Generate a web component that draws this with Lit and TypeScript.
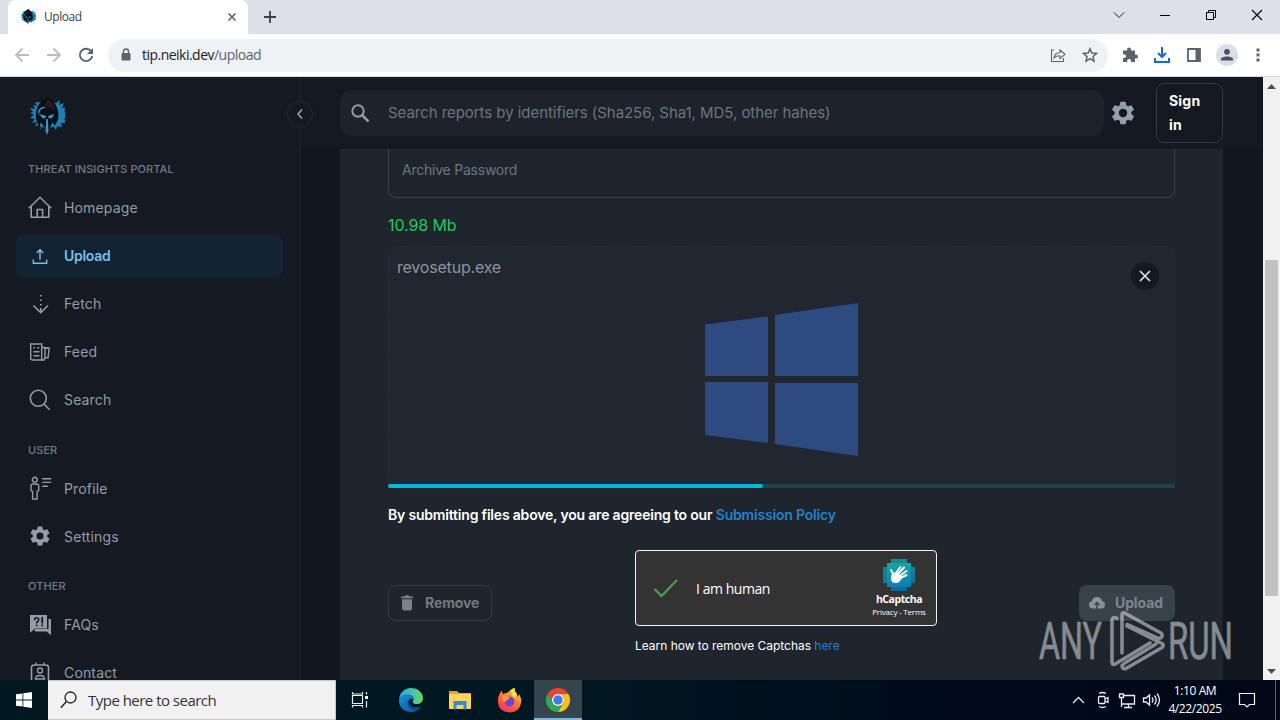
import { LitElement, html, css, svg } from "lit";
import { customElement } from "lit/decorators.js";
import { classMap } from "lit/directives/class-map.js";

const gear = "M19.14 12.94c.04-.3.06-.61.06-.94s-.02-.64-.07-.94l2.03-1.58a.49.49 0 0 0 .12-.61l-1.92-3.32a.49.49 0 0 0-.59-.22l-2.39.96a7 7 0 0 0-1.62-.94l-.36-2.54a.48.48 0 0 0-.48-.41h-3.84a.48.48 0 0 0-.47.41l-.36 2.54c-.59.24-1.13.57-1.62.94l-2.39-.96a.48.48 0 0 0-.59.22L2.74 8.87a.48.48 0 0 0 .12.61l2.03 1.58a7 7 0 0 0 0 1.88l-2.03 1.58a.49.49 0 0 0-.12.61l1.92 3.32c.12.22.37.29.59.22l2.39-.96c.5.38 1.03.7 1.62.94l.36 2.54c.05.24.24.41.48.41h3.84c.24 0 .44-.17.47-.41l.36-2.54a7 7 0 0 0 1.62-.94l2.39.96c.22.08.47 0 .59-.22l1.92-3.32a.48.48 0 0 0-.12-.61zM12 15.6a3.6 3.6 0 1 1 0-7.2 3.6 3.6 0 0 1 0 7.2z";

const icons: Record<string, unknown> = {
  home: svg`<path class="ln" d="M.8 12.2 12 1.3l11.2 10.9M3.2 10.5v10.7h17.6V10.5M9.2 21v-7.500h5.400V21"/>`,
  upload: svg`<path class="ln thin" d="M5.300 15.500v3.800h13.400v-3.800M12 15.800V6M8.800 9 12 5.800 15.200 9"/>`,
  fetch: svg`<path class="ln" d="M5.500 13.500l7.200 7.200 7.200-7.200M12.700 20V16"/><path class="fl" d="M12 3h1.600v1.600H12zM12 7.500h1.600v1.600H12zM12 12h1.600v1.600H12z"/>`,
  feed: svg`<path class="ln thin" d="M2.700 4h11v16h-9q-2 0-2-2zM13.700 7.200l7.500 1-1.200 9.600h-3.200l-.6 2.200h-2.500M17 8.200v9M5.500 7.800h1.600M9.300 7.800h2M5.500 11.700h6M5.500 15.700h6"/>`,
  search: svg`<circle class="ln" cx="10.300" cy="10.300" r="8"/><path class="ln" d="m16.200 16.200 5.400 5.600"/>`,
  profile: svg`<circle class="ln thin" cx="6.800" cy="3.700" r="2.400"/><path class="ln thin" d="M5 8h3.700q2 0 2 2v4.500l-1.600 1V23H4.600v-7.500l-1.600-1V10q0-2 2-2zM14.200 2.800h9M14.200 6.400h9M14.200 10.200h5.600"/>`,
  gear: svg`<path class="fl" d=${gear}/>`,
  faq: svg`<path class="fl" fill-rule="evenodd" d="M2 2h17v13.500H7L2 19.700zM20.500 6H23v16.300l-4.200-3.800H6.800V16H20.500zM5.700 7.300h1.700q0-1.700 1.500-1.700c1.700 0 1.200 1.600.4 2.200-1 .8-1.400 1.200-1.400 2.700h1.600c0-1.800 2-1.700 2-4q0-2.500-2.700-2.500-3 0-3.100 3.300zM7.900 11.600h1.600v1.600H7.900zM13.300 4h1.800v6.500h-1.800zM13.300 11.600h1.800v1.600h-1.800z"/>`,
  contact: svg`<rect class="ln" x="3.500" y="4" width="17" height="19" rx="2.500"/><circle class="ln thin" cx="12" cy="9.500" r="2.500"/><path class="ln thin" d="M7.500 18q0-3.500 4.500-3.500t4.500 3.500zM8 1.500V4M16 1.500V4"/>`,
};

const spartan = svg`
  <path fill="#207fb4" d="M9 5 6 6l2 3-4-1 2 4-5-1 3 4-3 1 4 2-4 3 5 1-3 4 5-1-2 4 5-1 0 4 3-3 5 3 5-3 3 4 1-4 5 1-1-4 5 0-2-4 4-1-3-3 3-2-4-2 3-4-5 1 2-5-5 2 1-5-4 3z"/>
  <path fill="#0a1017" d="M19 0Q9 4 7 15q-1 10 4 15l6 3 8-4q6-6 4-15Q27 5 19 0z"/>
  <path fill="#2a1a1f" d="M19 2q7 5 7 13l-3-4-7-2z"/>
  <path fill="#3796ca" d="m11 17 6 2-1 2.500q-4 0-5-4.500zm14 0-6 2 1 2.500q4 0 5-4.500zM17.300 22h1.600l.6 12-1.500 4-1.500-4zM9 14q3-5 8-4l-6 3-1 6zM12 25l3 6-4-2zM24 25l-3 6 4-2z"/>`;

const captchaRows = [[2, 6], [1, 7], [0, 8], [0, 8], [0, 8], [0, 8], [1, 7], [2, 6]];

@customElement("app-icon")
class AppIcon extends LitElement {
  static properties = { name: {} };
  declare name: string;
  static styles = css`
    :host { display: block; width: 24px; height: 24px; }
    svg { display: block; width: 100%; height: 100%; }
    .ln { fill: none; stroke: currentColor; stroke-width: 1.600; }
    .thin { stroke-width: 1.400; }
    .fl { fill: currentColor; }
  `;
  render() {
    return html`<svg viewBox="0 0 24 24">${icons[this.name]}</svg>`;
  }
}

@customElement("browser-chrome")
class BrowserChrome extends LitElement {
  static styles = css`
    :host { display: block; height: 77px; font-family: "Open Sans", sans-serif; color: #3c4043; }
    svg { display: block; fill: none; stroke: #5f6368; }
    .strip { height: 34px; background: #dde0e8; display: flex; align-items: center; padding-left: 8px; box-sizing: border-box; }
    .tab { width: 240px; height: 34px; border-radius: 8px 8px 0 0; background: #fff; display: flex; align-items: center; padding: 0 11px 0 12px; box-sizing: border-box; font-size: 12px; }
    .fav { width: 16px; height: 16px; }
    .tab span { flex: 1; margin-left: 8px; letter-spacing: -.45px; line-height: 16px; }
    .plus { margin-left: 15px; }
    .win { margin-left: auto; display: flex; align-items: center; gap: 34px; padding: 0 17px 5px 0; }
    .bar { height: 43px; background: #fff; display: flex; align-items: center; padding: 0 14px; box-sizing: border-box; border-bottom: 1px solid #d5d9de; }
    .nav { display: flex; gap: 16px; width: 94px; }
    .omni { width: 1000px; height: 33px; border-radius: 17px; background: #eff2f5; display: flex; align-items: center; padding: 0 10px; box-sizing: border-box; font-size: 14px; color: #5f6368; }
    .url { margin-left: 8px; flex: 1; letter-spacing: -.52px; padding-bottom: 1px; }
    .url b { font-weight: 400; color: #202124; }
    .share { margin-right: 16px; }
    .tools { display: flex; gap: 14px; align-items: center; margin-left: 13px; }
    .me { margin: 0 -1px; }
  `;
  render() {
    return html`
      <div class="strip">
        <div class="tab">
          <svg class="fav" viewBox="0 0 36 38"><g stroke="none">${spartan}</g></svg>
          <span>Upload</span>
          <svg width="10" height="10"><path d="m1.500 1.500 7 7m0-7-7 7" stroke-width="1.700"/></svg>
        </div>
        <svg class="plus" width="14" height="14"><path d="M7 1v12M1 7h12" stroke="#3c4043" stroke-width="1.800"/></svg>
        <div class="win">
          <svg width="12" height="12"><path d="m1 3.500 5 5 5-5" stroke="#222"/></svg>
          <svg width="12" height="12"><path d="M1 6.500h10" stroke="#000"/></svg>
          <svg width="12" height="12"><path d="M1.500 3.500h7v7h-7zM3.500 3V1.500h7v7H9" stroke="#000"/></svg>
          <svg width="12" height="12"><path d="m1 1 10 10m0-10L1 11" stroke="#000" stroke-width="1.100"/></svg>
        </div>
      </div>
      <div class="bar">
        <div class="nav">
          <svg width="16" height="16"><path d="M15 8H2m6.500-6.500L2 8l6.500 6.500" stroke="#bbbdc1" stroke-width="1.800"/></svg>
          <svg width="16" height="16"><path d="M1 8h13M7.500 1.500 14 8l-6.500 6.500" stroke="#bbbdc1" stroke-width="1.800"/></svg>
          <svg width="16" height="16"><path d="M13.300 4.500A6.200 6.200 0 1 0 14.200 9" stroke-width="1.900"/><path d="M15 1v6H9z" fill="#5f6368" stroke="none"/></svg>
        </div>
        <div class="omni">
          <svg width="16" height="16"><path d="M4 6.500h8v6.500H4z" fill="#5f6368"/><path d="M5.500 6.500V4.300q0-2.300 2.500-2.300t2.500 2.300v2.200" stroke-width="1.400"/></svg>
          <span class="url"><b>tip.neiki.dev</b>/upload</span>
          <svg class="share" width="16" height="16"><path d="M4 3H1.500v11.500h12V11M4 11c.4-3.600 2.500-5.200 6-5.200V3l5 4.300-5 4.200V8.700c-2.500 0-4.500.6-6 2.300z" stroke-width="1.100"/></svg>
          <svg width="16" height="16"><path d="m8 1.800 1.800 4.300 4.700.4-3.500 3 1 4.600-4-2.400-4 2.400 1-4.600-3.500-3 4.700-.4z" stroke-width="1.500"/></svg>
        </div>
        <div class="tools">
          <svg width="18" height="18"><path d="M2 4.500h4.200c-1-4 4.600-4 3.800 0h4v4c4-1 4 5 0 4V16H10c.8-4-4.600-4-3.800 0H2v-4c4 .8 4-4.400 0-3.600z" fill="#5f6368" stroke="none"/></svg>
          <svg width="18" height="18"><path d="M9 1v9.500M5 7l4 4 4-4M2 12v4h14v-4" stroke="#1a66d2" stroke-width="2"/></svg>
          <svg width="18" height="18"><path d="M3 3h12v12H3z" stroke-width="1.800"/><path d="M10.500 3H15v12h-4.500z" fill="#5f6368" stroke="none"/></svg>
          <svg class="me" width="22" height="22"><circle cx="11" cy="11" r="11" fill="#dcdee6" stroke="none"/><path d="M5 16.500v-1.300c0-3.600 12-3.600 12 0v1.300z" fill="#4a5060" stroke="none"/><circle cx="11" cy="7.800" r="2.900" fill="#4a5060" stroke="none"/></svg>
          <svg width="14" height="18"><path d="M5.500 2.500h3v3h-3zM5.500 7.500h3v3h-3zM5.500 12.500h3v3h-3z" fill="#5f6368" stroke="none"/></svg>
        </div>
      </div>`;
  }
}

@customElement("side-bar")
class SideBar extends LitElement {
  static styles = css`
    :host { display: block; position: relative; width: 300px; height: 603px; box-sizing: border-box; border-right: 1px solid #1f252d; background: #151a22; color: #939ca7; font-family: Inter, sans-serif; }
    .clip { height: 603px; overflow: hidden; padding: 20px 16px 0; box-sizing: border-box; }
    .logo { display: block; margin-left: 13px; width: 36px; height: 38px; }
    nav { padding-top: 10.500px; }
    .label { height: 40.500px; box-sizing: border-box; padding: 14px 12px 0; font-size: 11px; line-height: 18px; font-weight: 500; letter-spacing: .08px; color: #707a86; }
    .label.low { padding-top: 14.600px; }
    .item { height: 44px; margin-bottom: 4px; border-radius: 8px; display: flex; align-items: center; gap: 12px; padding: 0 12px; width: 267px; box-sizing: border-box; font-size: 14px; letter-spacing: .15px; }
    .item span { padding-bottom: 1px; }
    .item app-icon { margin-top: -1px; }
    .active { background: #122431; color: #77bfe8; font-weight: 600; letter-spacing: -.3px; }
    .collapse { position: absolute; right: -14px; top: 24px; width: 26px; height: 26px; box-sizing: border-box; border: 1px solid #242a33; border-radius: 50%; background: #151a22; display: flex; align-items: center; justify-content: center; }
  `;
  groups = [
    { label: "THREAT INSIGHTS PORTAL", items: [["home", "Homepage"], ["upload", "Upload"], ["fetch", "Fetch"], ["feed", "Feed"], ["search", "Search"]] },
    { label: "USER", items: [["profile", "Profile"], ["gear", "Settings"]] },
    { label: "OTHER", items: [["faq", "FAQs"], ["contact", "Contact"]] },
  ];
  render() {
    return html`
      <div class="clip">
        <svg class="logo" viewBox="0 0 36 38">${spartan}</svg>
        <nav>
          ${this.groups.map((g) => html`
            <div class=${classMap({ label: true, low: g.label === "USER" })}>${g.label}</div>
            ${g.items.map(([icon, text]) => html`
              <div class=${classMap({ item: true, active: text === "Upload" })}><app-icon name=${icon}></app-icon><span>${text}</span></div>`)}`)}
        </nav>
      </div>
      <div class="collapse"><svg width="8" height="12"><path d="M6 1.500 2 6l4 4.500" fill="none" stroke="#9ba3ad" stroke-width="1.600"/></svg></div>`;
  }
}

@customElement("upload-panel")
class UploadPanel extends LitElement {
  static styles = css`
    :host { display: block; width: 963px; height: 603px; background: #12171f; font-family: Inter, sans-serif; color: #fff; overflow: hidden; }
    svg { display: block; }
    header { height: 72px; box-sizing: border-box; background: #141921; padding: 6px 40px; display: flex; align-items: center; }
    .find { width: 764px; height: 46px; border-radius: 12px; background: #1e222b; display: flex; align-items: center; gap: 17px; padding-left: 10px; box-sizing: border-box; font-size: 15px; color: #6c757f; }
    .hint { letter-spacing: -.05px; padding-bottom: 2px; }
    .cog { color: #919eab; width: 28px; height: 28px; margin: 0 0 0 5px; }
    .sign { width: 67px; height: 60px; margin-left: 19px; box-sizing: border-box; border: 1px solid #343a42; border-radius: 8px; padding: 5px 12px; font-weight: 700; font-size: 14px; line-height: 24px; background: #14181f; letter-spacing: .2px; }
    .card { margin: 0 40px; height: 531px; box-sizing: border-box; padding: 0 48px; background: #1e252c; }
    .pass { height: 49px; box-sizing: border-box; border: 1px solid #3a434b; border-top: none; border-radius: 0 0 8px 8px; padding: 11px 13px; font-size: 14px; line-height: 20px; color: #6c757f; letter-spacing: -.23px; }
    .size { margin-top: 15px; height: 25px; line-height: 24px; font-size: 16px; color: #22c55e; letter-spacing: -.1px; }
    .file { position: relative; margin-top: 8px; height: 242px; box-sizing: border-box; border: 1px dashed #262e38; border-bottom: none; border-radius: 8px 8px 0 0; background: #212730; display: flex; flex-direction: column; }
    .name { padding: 8px 8px 0; line-height: 24px; font-size: 16px; color: #8c949d; letter-spacing: -.2px; }
    .art { margin: 24px 0 0 316px; }
    .close { position: absolute; right: 15px; top: 15px; width: 28px; height: 28px; border-radius: 50%; background: #141a22; display: flex; align-items: center; justify-content: center; }
    .track { margin: auto -1px 0; height: 4px; border-radius: 2px; background: #1b4352; }
    .fill { height: 4px; border-radius: 2px; background: #00b8d9; }
    .terms { margin-top: 15px; height: 24px; line-height: 24px; font-size: 14px; font-weight: 600; letter-spacing: -.19px; }
    .link { color: #2480cc; }
    .actions { margin-top: 23px; display: grid; grid-template-columns: 247px 302px 1fr; align-items: start; }
    .btn { height: 36px; margin-top: 35px; box-sizing: border-box; border-radius: 8px; display: flex; align-items: center; font-size: 14px; font-weight: 700; letter-spacing: -.1px; }
    .btn span { padding-bottom: 1px; }
    .remove { width: 104px; border: 1px solid #353e47; color: #717981; padding-left: 11px; gap: 11px; }
    .send { width: 96px; justify-self: end; background: #38424b; color: #7d868e; padding-left: 9px; gap: 9px; }
    .captcha { height: 76px; box-sizing: border-box; border: 1px solid #f4f4f4; border-radius: 4px; background: #333; display: flex; align-items: center; padding-left: 17px; font-family: "Open Sans", sans-serif; }
    .human { margin-left: 17px; font-size: 14px; width: 176px; letter-spacing: -.45px; }
    .brand { display: flex; flex-direction: column; align-items: center; width: 54px; }
    .brand b { font-size: 10.500px; line-height: 14px; margin-top: 1px; letter-spacing: -.45px; }
    .brand small { font-size: 8px; line-height: 11px; white-space: nowrap; letter-spacing: -.2px; }
    .learn { margin-top: 12px; font-size: 12px; line-height: 16px; white-space: nowrap; letter-spacing: -.03px; }
  `;
  progress = 47.6;
  render() {
    return html`
      <header>
        <div class="find">
          <svg width="21" height="21"><circle cx="8" cy="8" r="5.700" fill="none" stroke="#919aa5" stroke-width="2"/><path d="m12 12 6.500 6.500" stroke="#919aa5" stroke-width="2.500"/></svg>
          <span class="hint">Search reports by identifiers (Sha256, Sha1, MD5, other hahes)</span>
        </div>
        <app-icon class="cog" name="gear"></app-icon>
        <div class="sign">Sign<br>in</div>
      </header>
      <div class="card">
        <div class="pass">Archive Password</div>
        <div class="size"><span>10.98 Mb</span></div>
        <div class="file">
          <div class="name"><span>revosetup.exe</span></div>
          <svg class="art" width="154" height="154" fill="#2d4b80"><path d="m0 21.500 63-8V73H0zM70 12l83-12v73H70zM0 79h63v61L0 132zM70 80h83v73L70 141z"/></svg>
          <div class="close"><svg width="12" height="12"><path d="m1 1 10 10m0-10L1 11" stroke="#e3e6e9" stroke-width="1.600"/></svg></div>
          <div class="track"><div class="fill" style="width:${this.progress}%"></div></div>
        </div>
        <div class="terms"><span>By submitting files above, you are agreeing to our <span class="link">Submission Policy</span></span></div>
        <div class="actions">
          <div class="btn remove">
            <svg width="14" height="18" fill="#7b828b"><path d="M1 2.500h3.500l1-1.300h3l1 1.300H13v1.700H1zM2 5.300h10v9.200q0 2-2 2H4q-2 0-2-2z"/></svg><span>Remove</span>
          </div>
          <div>
            <div class="captcha">
              <svg width="26" height="24"><path d="m1.500 13 7 7L24 4" fill="none" stroke="#4a9a4f" stroke-width="2.400"/></svg>
              <span class="human">I am human</span>
              <div class="brand">
                <svg width="32" height="32">
                  <defs><linearGradient id="teal" gradientUnits="userSpaceOnUse" x1="14" y1="0" x2="18" y2="32"><stop stop-color="#17a99d"/><stop offset=".55" stop-color="#148fae"/><stop offset="1" stop-color="#0876b8"/></linearGradient></defs>
                  ${captchaRows.map(([a, b], y) => svg`<rect x=${a * 4} y=${y * 4} width=${(b - a) * 4} height="4" fill="url(#teal)" opacity=${y === 0 || y === 7 ? 0.75 : 1}/>`)}
                  <path fill="#0a5f7c" opacity=".4" d="M0 8h4v16H0zM28 8h4v16h-4z"/>
                  <path fill="none" stroke="#fff" stroke-width="2" stroke-linecap="round" d="m10.500 15-2.500-4M12.500 14.500l5-6.500M15 15l6-6.500M16.500 17l7-5M17.500 19l6-3"/>
                  <path fill="#fff" d="m9 13.500 1.500 1.500 3-2.500 5.500 5.500q-2 6-6 6-5.500 0-5-5.500z"/>
                </svg>
                <b>hCaptcha</b><small>Privacy - Terms</small>
              </div>
            </div>
            <div class="learn"><span>Learn how to remove Captchas <span class="link">here</span></span></div>
          </div>
          <div class="btn send">
            <svg width="18" height="16"><path fill="#89929a" d="M5 13.500q-4 0-4-3.800 0-3 3-3.700Q5 2 9 2t5 4q3 .7 3 3.700 0 3.800-4 3.800z"/><path d="M9 15V8M6.500 10 9 7.500l2.500 2.500" fill="none" stroke="#38424b" stroke-width="1.400"/></svg><span>Upload</span>
          </div>
        </div>
      </div>`;
  }
}

@customElement("task-bar")
class TaskBar extends LitElement {
  static styles = css`
    :host { display: flex; height: 40px; background: linear-gradient(90deg, #001820 0, #001722 45%, #000a1a 75%, #000818 100%); font-family: "Open Sans", sans-serif; }
    svg { display: block; }
    .cell { width: 48px; height: 40px; display: flex; align-items: center; justify-content: center; }
    .search { width: 288px; height: 40px; background: #f1f1f1; border: 1px solid #c6c9cb; border-width: 1px 1px 1px 0; box-sizing: border-box; display: flex; align-items: center; gap: 11px; padding-left: 12px; font-size: 15px; color: #333; letter-spacing: -.52px; }
    .task { width: 48px; height: 40px; display: flex; align-items: center; justify-content: center; }
    .apps { display: flex; gap: 1px; }
    .view { margin-right: 2px; }
    .on { background: #36444e; border-bottom: 2px solid #76b9ed; box-sizing: border-box; height: 40px; padding-top: 2px; }
    .tray { margin-left: auto; display: flex; align-items: center; }
    .clock { width: 66px; text-align: center; color: #fff; font-size: 12px; line-height: 18px; letter-spacing: -.4px; }
    .note { width: 38px; display: flex; justify-content: center; }
    .edge { width: 5px; height: 40px; border-left: 1px solid #59606c; box-sizing: border-box; margin-left: 9px; }
  `;
  render() {
    return html`
      <div class="cell"><svg width="16" height="16" fill="#fff"><path d="m0 2.300 6.500-.9v6.200H0zM7.300 1.300 16 0v7.600H7.300zM0 8.400h6.500v6.200L0 13.700zM7.300 8.400H16V16l-8.700-1.300z"/></svg></div>
      <div class="search">
        <svg width="17" height="18"><circle cx="10.500" cy="6.500" r="5.500" fill="none" stroke="#222" stroke-width="1.300"/><path d="M6.500 10.500.8 16.800" stroke="#222" stroke-width="1.400"/></svg>
        <span>Type here to search</span>
      </div>
      <div class="apps">
        <div class="task view"><svg width="18" height="18"><path d="M1.500 4.500h10v8h-10zM1.500 1v2h10V1M1.500 16.500v-2h10v2M15.500 1v2.500M15.500 10v6.500" fill="none" stroke="#e8eef0" stroke-width="1.200"/><path d="M14 5h3v3h-3z" fill="#fff"/></svg></div>
        <div class="task"><svg width="26" height="26" viewBox="0 0 26 26">
          <defs><linearGradient id="e1" x2="1"><stop stop-color="#25a9e0"/><stop offset="1" stop-color="#68d66a"/></linearGradient><linearGradient id="e2" x2="1" y2="1"><stop stop-color="#1592dc"/><stop offset="1" stop-color="#0c4f9e"/></linearGradient></defs>
          <path fill="url(#e1)" d="M1 12C2 5 7 1 13 1c7 0 12 5 12 10 0 4-3 6-6 6-4 0-5-1.500-4-3 2-3-1-6-4-6-5 0-9 2-10 4z"/>
          <path fill="url(#e2)" d="M1 13c1-4 5-5.500 9-5.500 3.500 0 6 2.500 5.500 5-3-2-5 0-5 2.500 0 4 5 7 12.500 4.500C21 23 17 25 13 25 6 25 .5 20 1 13z"/><path fill="#0c438c" d="M10.500 13c-3 4 1 10 7 10 2-.3 4-1.500 5.500-3.500-6 2.500-12.500-.5-12.500-6.500z"/></svg></div>
        <div class="task"><svg width="24" height="22"><path d="M1 2h8l2 2h12v16H1z" fill="#e8a628"/><path d="M1 5h22v15H1z" fill="#ffd45d"/><path d="M5.500 12h13v8.500h-3V16h-7v4.500h-3z" fill="#368ccc"/></svg></div>
        <div class="task"><svg width="25" height="25" viewBox="0 0 25 25">
          <defs><linearGradient id="f1" x1=".8" x2=".2" y2="1"><stop stop-color="#ffdf3d"/><stop offset=".45" stop-color="#ff7b2e"/><stop offset="1" stop-color="#f02a60"/></linearGradient></defs>
          <path fill="url(#f1)" d="M3 5q1-2 2-2 0 2 1 3 2-1 4-1 1-1 3.500-3L17 0q-1 3 2 5 1 1 2 4l1-3q3 5 2 9-1.500 9-11 9.500Q2 24 1 15 .5 9 3 5z"/><circle cx="12.500" cy="13.500" r="5" fill="#7542d5"/><path fill="#ff9b32" d="M5 8q5-2 8 2l-3 2-2 2q-3-1-3-6z"/><path fill="#ffe14a" d="M14 2q2-2 4-2-1 3 2 6l-2 4q-4-3-4-8z"/></svg></div>
        <div class="task on"><svg width="24" height="24" viewBox="0 0 24 24"><path fill="#e94335" d="M1.600 6A12 12 0 0 1 22.400 6H12a6 6 0 0 0-5.200 9z"/><path fill="#fbc116" d="M22.400 6A12 12 0 0 1 12 24l5.200-9A6 6 0 0 0 12 6z"/><path fill="#31a853" d="M12 24A12 12 0 0 1 1.600 6l5.200 9a6 6 0 0 0 10.400 0z"/><circle cx="12" cy="12" r="6" fill="#fff"/><circle cx="12" cy="12" r="4.700" fill="#3b7ded"/></svg></div>
      </div>
      <div class="tray">
        <svg width="90" height="20" fill="none" stroke="#e8edf2" stroke-width="1.300">
          <path d="m1 13 5.500-5.500L12 13"/>
          <rect x="26.500" y="6.500" width="6.500" height="7" rx="1"/><path d="m33 9 3-1.500v5L33 11M27 3.500q3.500-2 7 0M27 16.500q3.500 2 7 0"/>
          <path d="M51 5.500h11.500v8.500H50M56.500 14v3M52 17.500h8M47.500 4h4v3.500h-4zM49.500 8v9"/>
          <path d="M71.500 8h2.500l3.500-3v10L74 12h-2.500zM80 7.500q2 2.500 0 5M82.500 5.500q3.500 4.500 0 9M85 3.500q5 6.500 0 13"/>
        </svg>
        <div class="clock"><div>1:10 AM</div><div>4/22/2025</div></div>
        <div class="note"><svg width="18" height="18"><path d="M1.500 2.500h15v11h-5l-2.500 2.500-2.500-2.500h-5z" fill="none" stroke="#eef2f5" stroke-width="1.200"/></svg></div>
        <div class="edge"></div>
      </div>`;
  }
}

@customElement("app-root")
class AppRoot extends LitElement {
  static styles = css`
    :host { display: block; position: relative; width: 1280px; height: 720px; overflow: hidden; }
    .page { display: flex; height: 603px; }
    .scroll { width: 17px; height: 603px; background: #f1f1f1; display: flex; flex-direction: column; align-items: center; box-sizing: border-box; padding: 7px 0 6px; justify-content: space-between; }
    .scroll svg { display: block; }
    .thumb { width: 13px; height: 336px; background: #c1c1c1; margin-top: 98px; }
    .mark { position: absolute; left: 1036px; top: 606px; opacity: .5; pointer-events: none; overflow: visible; }
  `;
  render() {
    return html`
      <browser-chrome></browser-chrome>
      <div class="page">
        <side-bar></side-bar>
        <upload-panel></upload-panel>
        <div class="scroll">
          <svg width="9" height="5"><path d="M0 5 4.500 0 9 5z" fill="#505050"/></svg>
          <div class="thumb"></div>
          <svg width="9" height="5"><path d="m0 0 4.500 5L9 0z" fill="#505050"/></svg>
        </div>
      </div>
      <task-bar></task-bar>
      <svg class="mark" width="230" height="68" fill="#edf0f2" stroke="#edf0f2" stroke-width=".6" font-family="Roboto, sans-serif" font-size="52">
        <text x="3" y="53" textLength="63" lengthAdjust="spacingAndGlyphs">ANY</text>
        <text x="132" y="53" textLength="65" lengthAdjust="spacingAndGlyphs">RUN</text>
        <path fill="none" stroke-width="3.600" stroke-linejoin="round" stroke-linecap="round" d="M81 12.300Q76 10 76 15V56q0 4 4 1.500L114 37M86 47V9q0-3.500 3.500-1.500L125 27q2.500 2.500 0 4.500t-5 0L91 18.500M91 20l35 17.500q2.500 2 0 4L90 62.500q-4 1-4-3l3.500-3L120 38"/>
      </svg>`;
  }
}
